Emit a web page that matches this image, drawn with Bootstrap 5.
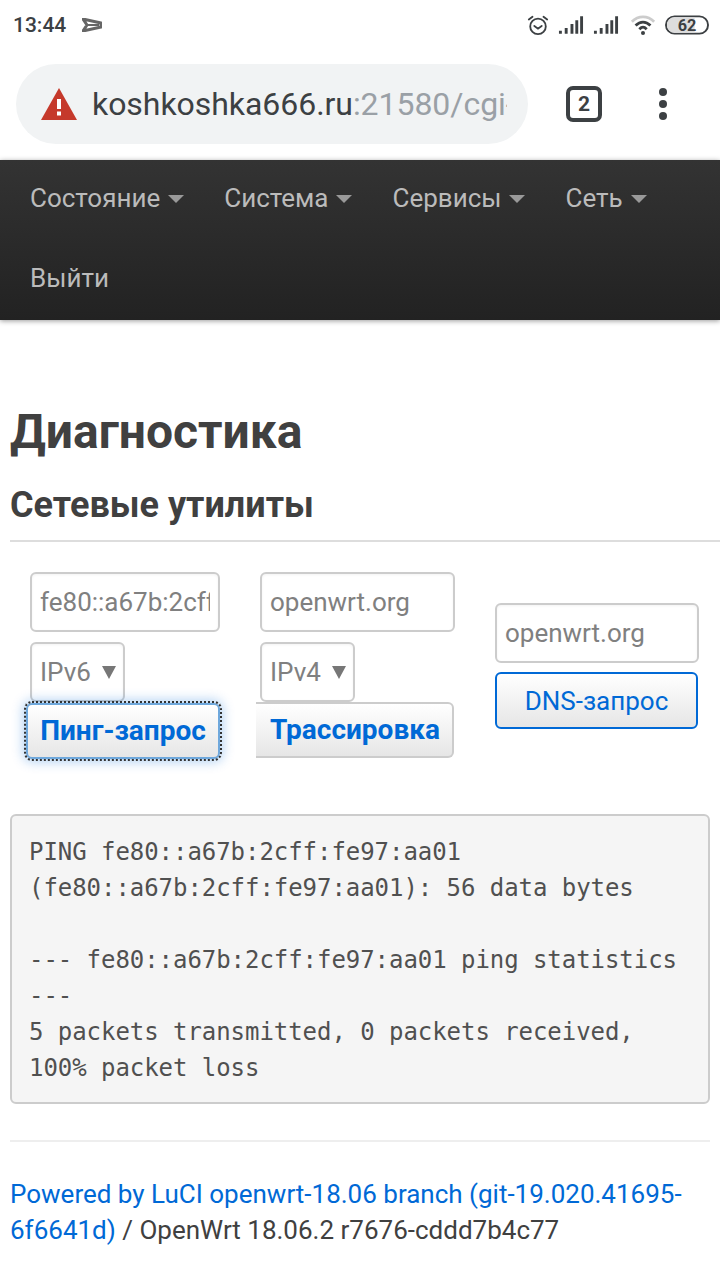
<!DOCTYPE html>
<html lang="ru"><head><meta charset="utf-8"><title>Диагностика</title>
<link href="https://cdn.jsdelivr.net/npm/bootstrap@5.3.0/dist/css/bootstrap.min.css" rel="stylesheet">
<style>
html,body{margin:0;background:#fff;font-family:Roboto,sans-serif;color:#404040;overflow:hidden}
.stbar{height:50px;padding:0 11px 0 13px}
.sttime{font-size:21px;font-weight:500;color:#3c4043;line-height:50px}
.stic{margin-left:9px}
.stic2{margin-left:11px}
.adrow{height:110px;padding:14px 0 16px 16px}
.adpill{width:512px;height:80px;border-radius:40px;background:#f1f3f4;padding-left:25px;overflow:hidden;white-space:nowrap}
.adtxt{font-size:32px;color:#3c4043;margin-left:15px;width:415px;overflow:hidden;letter-spacing:-.05px}
.adtxt span{color:#9aa0a6}
.tabcount{width:36px;height:36px;border:4px solid #3c4043;border-radius:7px;font-size:21px;font-weight:700;line-height:28px;text-align:center;color:#3c4043;margin-left:38px}
.dots{margin-left:57px;gap:4px}
.dots i{display:block;width:8px;height:8px;border-radius:50%;background:#3c4043}
.topnav{height:160px;background:linear-gradient(#333,#222);box-shadow:0 1px 5px rgba(0,0,0,.4);padding:0 10px;position:relative}
.topnav .nv{height:80px;padding:0 20px 4px;color:#bbb;font-size:26px;text-decoration:none;white-space:nowrap;display:flex;align-items:center}
.topnav .nv.dd::after{content:"";margin-left:8px;margin-top:1px;border-left:8px solid transparent;border-right:8px solid transparent;border-top:8px solid #999}
.pagewrap{padding:0 10px}
.pgh{font-size:48px;font-weight:700;line-height:56px;color:#404040;margin:84px 0 0}
.pgh2{font-size:36px;font-weight:700;line-height:40px;color:#404040;margin:25px -10px 0 0;padding-bottom:15px;border-bottom:2px solid #ddd}
.tools{height:272px;align-items:flex-start}
.ctl{display:block;width:100%;height:60px;border:2px solid #ccc;border-radius:6px;background:#fff;box-shadow:inset 0 1px 3px rgba(0,0,0,.05);padding:0 8px;font-family:Roboto,sans-serif;font-size:26px;color:#808080;line-height:56px;outline:0}
.sel{width:95px;margin-top:10px;display:flex;align-items:center}
.sel::after{content:"";margin-left:11px;margin-top:1px;border-left:7px solid transparent;border-right:7px solid transparent;border-top:13px solid #777}
.tb{display:block;height:56px;border:2px solid #ccc;border-left-width:0;border-radius:0 6px 6px 0;background:linear-gradient(#fff,#e6e6e6);color:#0069d6;font-size:28px;font-weight:700;line-height:52px;text-align:center;padding:0}
.col1{margin:30px 0 0 20px;width:190px}
.col2{margin:30px 0 0 40px;width:195px}
.col3{margin:61px 0 0 40px;width:204px}
.ping{width:194px;margin:1px 0 0 -4px;border:2px solid #6fa8dc;border-radius:6px;outline:2px dotted #333;outline-offset:0;box-shadow:0 0 12px 3px rgba(0,105,214,.3)}
.trace{width:198px;margin:0 0 0 -4px;padding-left:2px}
.dnsb{height:57px;margin-top:9px;width:203px;display:block;border:2px solid #0069d6;border-radius:6px;background:linear-gradient(#fff,#e6e6e6);color:#0069d6;font-size:26px;line-height:52px;text-align:center;padding:0}
.out{margin:0;height:290px;background:#f5f5f5;border:2px solid #ccc;border-radius:6px;padding:18px 17px;font-family:"DejaVu Sans Mono",monospace;font-size:24px;letter-spacing:-.05px;line-height:36px;color:#505050;overflow:hidden}
.foot{margin-top:36px;border-top:2px solid #eee;padding-top:34px;font-size:26px;line-height:36px;color:#404040}
.foot a{color:#0069d6;text-decoration:none}
</style></head><body>
<div class="stbar d-flex align-items-center">
<span class="sttime">13:44</span>
<svg class="ms-3" width="20" height="14" viewBox="0 0 20 14"><path d="M1 1 19 5 19 9 1 13 5 7Z" fill="none" stroke="#666" stroke-width="3" stroke-linejoin="round"/><path d="M6 7h11" stroke="#666" stroke-width="2"/></svg>
<div class="ms-auto d-flex align-items-center">
<svg width="22" height="22" viewBox="0 0 24 24" fill="none" stroke="#3c4043" stroke-width="2"><circle cx="12" cy="13.500" r="8.500"/><path d="M8 13l4 3 4-3M2 6l4-3M22 6l-4-3" stroke-linecap="round"/></svg>
<svg class="stic" width="26" height="20" viewBox="0 0 27 20" fill="#3c4043"><path d="M1 16h3v3H1zM7 13h3v6H7zM13 9h3v10h-3zM18 5h3v14h-3zM23 1h3v18h-3z"/></svg>
<svg class="stic" width="26" height="20" viewBox="0 0 27 20" fill="#3c4043"><path d="M1 16h3v3H1zM7 13h3v6H7zM13 9h3v10h-3zM18 5h3v14h-3zM23 1h3v18h-3z"/></svg>
<svg class="stic2" width="26" height="21" viewBox="0 0 28 22" fill="none" stroke-width="3"><path d="M2 7C9 0 19 0 26 7" stroke="#ccc"/><path d="M6 11c5-5 11-5 16 0M10 15c3-3 5-3 8 0" stroke="#3c4043"/><circle cx="14" cy="19" r="2.200" fill="#3c4043" stroke="none"/></svg>
<svg class="stic" width="44" height="20" viewBox="0 0 46 20"><rect x="1" y="1" width="44" height="18" rx="9" fill="#fff" stroke="#3c4043" stroke-width="2"/><path d="M10 2h21v16H10a8 8 0 0 1 0-16Z" fill="#ddd"/><text x="23" y="16" text-anchor="middle" font-family="Roboto" font-weight="700" font-size="17" fill="#3c4043">62</text></svg>
</div></div>
<div class="adrow d-flex align-items-center">
<div class="adpill d-flex align-items-center flex-shrink-0">
<svg width="36" height="32" viewBox="0 0 36 32" class="flex-shrink-0"><path d="M18 0 36 32H0Z" fill="#c5392b"/><path d="M16 11h4v10h-4zM16 23.500h4v4h-4z" fill="#fff"/></svg>
<div class="adtxt">koshkoshka666.ru<span>:21580/cgi-</span></div>
</div>
<div class="tabcount flex-shrink-0">2</div>
<div class="dots d-flex flex-column"><i></i><i></i><i></i></div>
</div>
<nav class="topnav d-flex flex-wrap">
<a class="nv dd" href="#">Состояние</a><a class="nv dd" href="#">Система</a><a class="nv dd" href="#">Сервисы</a><a class="nv dd" href="#">Сеть</a><a class="nv" href="#">Выйти</a>
</nav>
<main class="pagewrap">
<h1 class="pgh">Диагностика</h1>
<h2 class="pgh2">Сетевые утилиты</h2>
<div class="tools d-flex">
<div class="col1"><input class="ctl" value="fe80::a67b:2cff:fe97:aa01"><div class="ctl sel">IPv6</div><button class="tb ping">Пинг-запрос</button></div>
<div class="col2"><input class="ctl" value="openwrt.org"><div class="ctl sel">IPv4</div><button class="tb trace">Трассировка</button></div>
<div class="col3"><input class="ctl" value="openwrt.org"><button class="dnsb">DNS-запрос</button></div>
</div>
<pre class="out">PING fe80::a67b:2cff:fe97:aa01
(fe80::a67b:2cff:fe97:aa01): 56 data bytes

--- fe80::a67b:2cff:fe97:aa01 ping statistics
---
5 packets transmitted, 0 packets received,
100% packet loss</pre>
<footer class="foot"><a href="#">Powered by LuCI openwrt-18.06 branch (git-19.020.41695-6f6641d)</a> / OpenWrt 18.06.2 r7676-cddd7b4c77</footer>
</main>
</body></html>
